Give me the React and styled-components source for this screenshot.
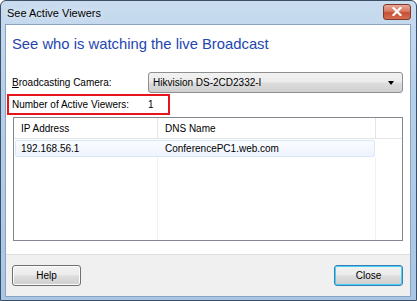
import styled, { createGlobalStyle } from "styled-components";

const GlobalStyle = createGlobalStyle`
  html, body {
    margin: 0;
    padding: 0;
    background: #fff;
  }
  body {
    font-family: "Liberation Sans", Arial, sans-serif;
    font-size: 10px;
    color: #000;
  }
`;

const viewers = [{ ip: "192.168.56.1", dns: "ConferencePC1.web.com" }];

function App() {
  return (
    <>
      <GlobalStyle />
      <Window>
        <TitleBar>
          <Title>See Active Viewers</Title>
          <CloseX aria-label="Close">
            <svg width="12" height="9" viewBox="0 0 12 9">
              <path d="M2.5 1 L9.5 8 M9.5 1 L2.5 8" stroke="#fff" strokeWidth="2.2" strokeLinecap="square" />
            </svg>
          </CloseX>
        </TitleBar>
        <Client>
          <Body>
            <Heading>See who is watching the live Broadcast</Heading>
            <FieldRow>
              <Label>
                <u>B</u>roadcasting Camera:
              </Label>
              <Combo>
                <span>Hikvision DS-2CD2332-I</span>
                <Arrow />
              </Combo>
            </FieldRow>
            <CountRow>
              <Label>Number of Active Viewers:</Label>
              <span>1</span>
            </CountRow>
            <List>
              <HeaderRow>
                <HeadCell $w={144}>IP Address</HeadCell>
                <HeadCell $w={218}>DNS Name</HeadCell>
                <HeadCell $grow />
              </HeaderRow>
              {viewers.map((v) => (
                <ItemRow key={v.ip}>
                  <Cell $w={144}>{v.ip}</Cell>
                  <Cell $w={216}>{v.dns}</Cell>
                </ItemRow>
              ))}
              <Filler>
                <Guide $left={144} />
                <Guide $left={362} />
              </Filler>
            </List>
          </Body>
          <Footer>
            <Button>Help</Button>
            <Button $focus>Close</Button>
          </Footer>
        </Client>
      </Window>
    </>
  );
}

export default App;

const Window = styled.div`
  width: 417px;
  height: 301px;
  box-sizing: border-box;
  display: flex;
  flex-direction: column;
  background: linear-gradient(180deg, #c9dcef 0%, #b7d0ea 30%, #a9c6e6 100%);
  border: 1px solid #3c4f66;
  border-radius: 6px 6px 0 0;
  padding: 0 5px 3px 4px;
`;

const TitleBar = styled.div`
  height: 23px;
  display: flex;
  align-items: center;
  justify-content: space-between;
  padding-left: 2px;
`;

const Title = styled.span`
  font-size: 11px;
  color: #000;
  text-shadow: 0 0 6px rgba(255, 255, 255, 0.9);
`;

const CloseX = styled.div`
  width: 28px;
  height: 16px;
  margin-top: -2px;
  box-sizing: border-box;
  border: 1px solid #7a3a2c;
  border-radius: 3px;
  background: linear-gradient(180deg, #e9a898 0%, #d97862 45%, #c64e33 55%, #d66e50 100%);
  display: flex;
  align-items: center;
  justify-content: center;
`;

const Client = styled.div`
  flex: 1;
  display: flex;
  flex-direction: column;
  background: #fff;
  border: 1px solid #8aa3bf;
`;

const Body = styled.div`
  flex: 1;
  display: flex;
  flex-direction: column;
  padding: 9px 7px 13px 6px;
`;

const Heading = styled.div`
  font-size: 14.8px;
  color: #2446b0;
  line-height: 20px;
  margin-bottom: 18px;
`;

const FieldRow = styled.div`
  display: flex;
  align-items: center;
  height: 21px;
`;

const Label = styled.span`
  width: 136px;
  flex: none;
`;

const Combo = styled.div`
  flex: 1;
  height: 21px;
  box-sizing: border-box;
  border: 1px solid #8e8f8f;
  border-radius: 3px;
  background: linear-gradient(180deg, #f2f2f2 0%, #ebebeb 48%, #dddddd 52%, #cfcfcf 100%);
  display: flex;
  align-items: center;
  justify-content: space-between;
  padding: 0 8px 0 4px;
`;

const Arrow = styled.span`
  width: 0;
  height: 0;
  border-left: 3.5px solid transparent;
  border-right: 3.5px solid transparent;
  border-top: 4px solid #000;
`;

const CountRow = styled.div`
  display: flex;
  align-items: center;
  height: 21px;
  width: 163px;
  box-sizing: border-box;
  margin: 1px 0 2px -5px;
  padding-left: 3px;
  border: 2px solid #e8141b;
`;

const List = styled.div`
  flex: 1;
  display: flex;
  flex-direction: column;
  margin-left: 1px;
  border: 1px solid #828790;
  background: #fff;
`;

const HeaderRow = styled.div`
  display: flex;
  height: 20px;
  border-bottom: 1px solid #e5e5e5;
`;

const HeadCell = styled.div`
  width: ${(p) => (p.$w ? `${p.$w}px` : "auto")};
  flex: ${(p) => (p.$grow ? 1 : "none")};
  box-sizing: border-box;
  display: flex;
  align-items: center;
  padding-left: 7px;
  border-right: ${(p) => (p.$grow ? "none" : "1px solid #e5e5e5")};
`;

const ItemRow = styled.div`
  display: flex;
  width: 360px;
  height: 17px;
  margin: 1px 0 0 1px;
  box-sizing: border-box;
  border: 1px solid #d9e8fb;
  border-radius: 2px;
  background: linear-gradient(180deg, #fafcff 0%, #eef4fd 100%);
`;

const Cell = styled.div`
  width: ${(p) => p.$w}px;
  flex: none;
  display: flex;
  align-items: center;
  padding-left: 5px;
  box-sizing: border-box;
`;

const Filler = styled.div`
  flex: 1;
  position: relative;
`;

const Guide = styled.div`
  position: absolute;
  top: 0;
  bottom: 0;
  left: ${(p) => p.$left - 1}px;
  width: 1px;
  background: #f2f2f2;
`;

const Footer = styled.div`
  height: 41px;
  display: flex;
  align-items: center;
  justify-content: space-between;
  padding: 0 7px 0 6px;
  background: #f0f0f0;
  border-top: 1px solid #dfdfdf;
`;

const Button = styled.button`
  width: 69px;
  height: 21px;
  font-family: "Liberation Sans", Arial, sans-serif;
  font-size: 10px;
  color: #000;
  border: 1px solid ${(p) => (p.$focus ? "#3c7fb1" : "#707070")};
  border-radius: 3px;
  background: linear-gradient(180deg, #f2f2f2 0%, #ebebeb 48%, #dddddd 52%, #cfcfcf 100%);
  box-shadow: ${(p) => (p.$focus ? "inset 0 0 0 1px #48d0fd" : "inset 0 0 0 1px #fcfcfc")};
  padding: 0;
`;
